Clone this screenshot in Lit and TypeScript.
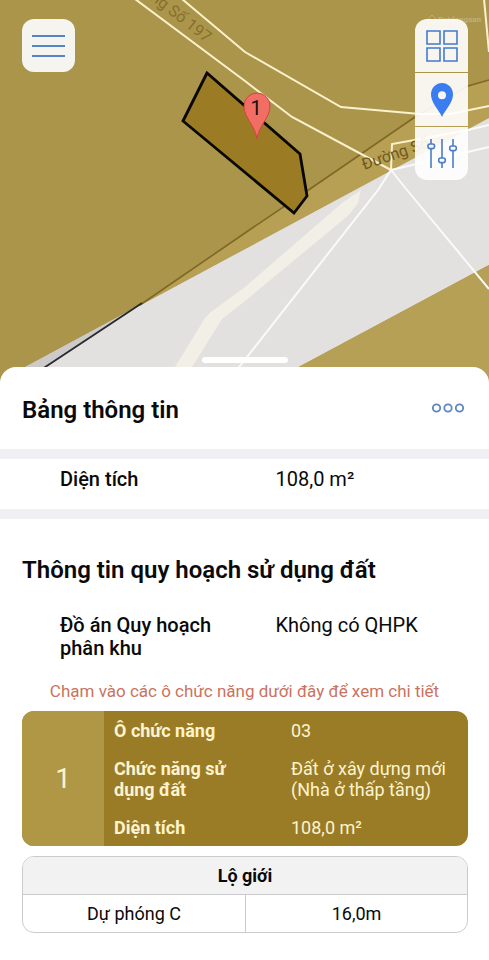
import { LitElement, html, css, svg } from "lit";
import { customElement } from "lit/decorators.js";

@customElement("planning-map")
class PlanningMap extends LitElement {
  static styles = css`
    :host {
      display: block;
      position: relative;
      height: 385px;
      overflow: hidden;
      background: #ab954b;
      font-family: Roboto, "Noto Sans", sans-serif;
    }
    .canvas {
      position: absolute;
      inset: 0;
      width: 100%;
      height: 100%;
    }
    .label { font-size: 16px; fill: #856f2d; }
    .label.dark { fill: #6f5a20; }
    .watermark { font-size: 8px; font-weight: 700; fill: #fff; opacity: 0.25; }
    .pin-label { font-size: 20px; font-weight: 400; fill: #111; }
    .bar {
      position: relative;
      display: flex;
      justify-content: space-between;
      align-items: flex-start;
      padding: 19px 21px 0 22px;
    }
    button {
      display: flex;
      align-items: center;
      justify-content: center;
      width: 53px;
      height: 53px;
      padding: 0;
      border: 0;
      background: #f6f4ee;
      cursor: pointer;
    }
    .menu { border-radius: 12px; }
    .tools {
      display: flex;
      flex-direction: column;
      gap: 1px;
      border-radius: 12px;
      overflow: hidden;
    }
    .tools button { background: rgba(255, 255, 255, 0.9); }
    .grip {
      position: absolute;
      left: 50%;
      bottom: 22px;
      width: 86px;
      height: 6px;
      margin-left: -43px;
      border-radius: 3px;
      background: #fff;
    }
  `;

  private drawing() {
    return svg`
      <polygon points="0,0 489,0 489,118 25,367 0,385" fill="#ab954b"/>
      <polygon points="140,305 245,233 310,189 415,117 468,86 489,80 489,118" fill="#b7a053"/>
      <polygon points="489,118 489,265 265,385 -8,385" fill="#e2e1e0"/>
      <polygon points="25,367 -8,385 18,385 140,305" fill="#cccbca"/>
      <polygon points="489,265 489,385 265,385" fill="#b5a055"/>
      <path d="M164 385 175 367 205 318 211 312 245 287 342 203 361 190 358 203 350 214 245 301 222 319 192 367 181 385Z" fill="#f1efe6"/>
      <path d="M140 305 245 233 310 189 415 117 468 86 489 80" fill="none" stroke="#7e6825" stroke-width="1.6"/>
      <path d="M18 385 130 311 142 303" fill="none" stroke="#29282f" stroke-width="1.8"/>
      <g fill="none" stroke="#fbf2cd" stroke-width="2">
        <path d="M135 -1 245 81 292 117 391 170"/>
        <path d="M182 -1 245 52 341 107 420 114 450 114 489 106"/>
        <path d="M484 -1 489 52"/>
        <path d="M391 170 392 144 420 139 468 130"/>
      </g>
      <g fill="none" stroke="#fafafa" stroke-width="2">
        <path d="M468 130 489 125M391 170 489 147M391 170 378 190 247 357 225 385M391 170 407 190 489 289"/>
      </g>
      <text class="label" text-anchor="end" transform="translate(206 43) rotate(38)">ng Số 197</text>
      <text class="label dark" transform="translate(364 170) rotate(-19)">Đường Số</text>
      <path d="M427 20 432 15 437 20M429 19v6h6v-6" fill="none" stroke="#fff" stroke-opacity=".25"/>
      <text class="watermark" x="438" y="22">Batdongsan</text>
      <polygon points="207,73 183,121 294,213 307,196 300,154" fill="#9b7c25" stroke="#080703" stroke-width="2.8"/>
      <path d="M257 139C255 125 244 118 244 106a13 13 0 0 1 26 0C270 118 259 125 257 139Z" fill="#f26d64" stroke="#cf4640"/>
      <text class="pin-label" x="256" y="115" text-anchor="middle">1</text>
    `;
  }

  render() {
    return html`
      <svg class="canvas" viewBox="0 0 489 385" preserveAspectRatio="xMidYMin slice" aria-hidden="true">
        ${this.drawing()}
      </svg>
      <div class="bar">
        <button class="menu" aria-label="Menu">
          <svg width="33" height="24" viewBox="0 0 33 24" stroke="#5584c8" stroke-width="2">
            <path d="M0 2h33M0 12h33M0 22h33" />
          </svg>
        </button>
        <div class="tools">
          <button aria-label="Lớp bản đồ">
            <svg width="32" height="32" viewBox="0 0 32 32" fill="none" stroke="#4379d3" stroke-width="1.6">
              <path d="M1 1h13v13H1zM18 1h13v13H18zM1 18h13v13H1zM18 18h13v13H18z" />
            </svg>
          </button>
          <button aria-label="Vị trí">
            <svg width="24" height="34" viewBox="0 0 24 34" fill="#3b7cf0" fill-rule="evenodd">
              <path d="M12 34C9 27 1 20 1 11.500A11 11.500 0 0 1 23 11.500C23 20 15 27 12 34ZM12 8.300a4 4 0 1 0 0 8 4 4 0 0 0 0-8Z" />
            </svg>
          </button>
          <button aria-label="Tùy chỉnh">
            <svg width="32" height="32" viewBox="0 0 32 32" fill="none" stroke="#4a7cc8" stroke-width="1.600">
              <path d="M5 1v5M5 11v19M16 1v19M16 25v5M27 1v7M27 13v17" />
              <rect x="2" y="6" width="6.500" height="4.600" rx="2" />
              <rect x="12.700" y="20" width="6.600" height="4.600" rx="2" />
              <rect x="23.700" y="8" width="6.600" height="4.600" rx="2" />
            </svg>
          </button>
        </div>
      </div>
      <div class="grip"></div>
    `;
  }
}

@customElement("app-root")
class AppRoot extends LitElement {
  static styles = css`
    :host {
      display: block;
      min-height: 100vh;
      background: #fff;
      color: #0a0a0a;
      font-family: Roboto, "Noto Sans", sans-serif;
    }
    .sheet {
      position: relative;
      margin-top: -18px;
      border-radius: 16px 16px 0 0;
      background: #fff;
    }
    .head {
      display: flex;
      align-items: center;
      justify-content: space-between;
      height: 82px;
      padding: 0 24px 0 22px;
    }
    h1, h2 { margin: 0; font-size: 24px; line-height: 28px; font-weight: 600; }
    h1 { padding-top: 4px; }
    .more { display: flex; padding: 0; border: 0; background: none; cursor: pointer; }
    .band { height: 10px; background: #f0f0f4; }
    dl {
      display: grid;
      grid-template-columns: 1fr 1fr;
      column-gap: 24px;
      margin: 0;
      padding: 0 22px 0 60px;
      font-size: 20px;
      line-height: 23px;
    }
    dt { font-weight: 500; }
    dd { margin: 0; }
    .area { padding-top: 9px; padding-bottom: 18px; }
    .plan { padding-top: 30px; }
    h2 { padding: 37px 22px 0; }
    .hint {
      margin: 19px 0 8px;
      text-align: center;
      font-size: 17px;
      line-height: 24px;
      color: #c9735f;
    }
    .card {
      display: grid;
      grid-template-columns: 82px 1fr;
      width: calc(100% - 43px);
      margin: 0 21px 10px 22px;
      padding: 0;
      border: 0;
      border-radius: 12px;
      overflow: hidden;
      background: #9b7c26;
      color: #fcf3cf;
      font: inherit;
      font-size: 18px;
      line-height: 21px;
      text-align: left;
      cursor: pointer;
    }
    .num {
      display: flex;
      align-items: center;
      justify-content: center;
      background: #af9745;
      font-size: 28px;
    }
    .cells {
      display: grid;
      grid-template-columns: 1fr 1fr;
      gap: 17px 10px;
      padding: 9px 10px 8px;
    }
    .key { max-width: 130px; font-weight: 700; }
    table {
      width: calc(100% - 43px);
      margin: 0 21px 27px 22px;
      border: 1px solid #cbcbcd;
      border-radius: 12px;
      border-spacing: 0;
      table-layout: fixed;
      overflow: hidden;
      font-size: 18px;
      line-height: 21px;
      text-align: center;
    }
    th, td { padding: 8px 0; }
    th { background: #f2f2f3; font-weight: 700; }
    td { border-top: 1px solid #cbcbcd; }
    td + td { border-left: 1px solid #cbcbcd; }
  `;

  private fields = [
    ["Ô chức năng", "03"],
    ["Chức năng sử dụng đất", "Đất ở xây dựng mới (Nhà ở thấp tầng)"],
    ["Diện tích", "108,0 m²"],
  ];

  render() {
    return html`
      <planning-map></planning-map>
      <main class="sheet">
        <header class="head">
          <h1>Bảng thông tin</h1>
          <button class="more" aria-label="Thêm">
            <svg width="34" height="12" viewBox="0 0 34 12" fill="none" stroke="#5d87c0" stroke-width="1.800">
              <circle cx="5.500" cy="6" r="3.700" />
              <circle cx="17" cy="6" r="3.700" />
              <circle cx="28.500" cy="6" r="3.700" />
            </svg>
          </button>
        </header>
        <div class="band"></div>
        <dl class="area">
          <dt>Diện tích</dt>
          <dd>108,0 m²</dd>
        </dl>
        <div class="band"></div>
        <h2>Thông tin quy hoạch sử dụng đất</h2>
        <dl class="plan">
          <dt>Đồ án Quy hoạch phân khu</dt>
          <dd>Không có QHPK</dd>
        </dl>
        <p class="hint">Chạm vào các ô chức năng dưới đây để xem chi tiết</p>
        <button class="card">
          <span class="num">1</span>
          <span class="cells">
            ${this.fields.map(
              ([key, value]) => html`<span class="key">${key}</span><span>${value}</span>`
            )}
          </span>
        </button>
        <table>
          <thead>
            <tr><th colspan="2">Lộ giới</th></tr>
          </thead>
          <tbody>
            <tr><td>Dự phóng C</td><td>16,0m</td></tr>
          </tbody>
        </table>
      </main>
    `;
  }
}
